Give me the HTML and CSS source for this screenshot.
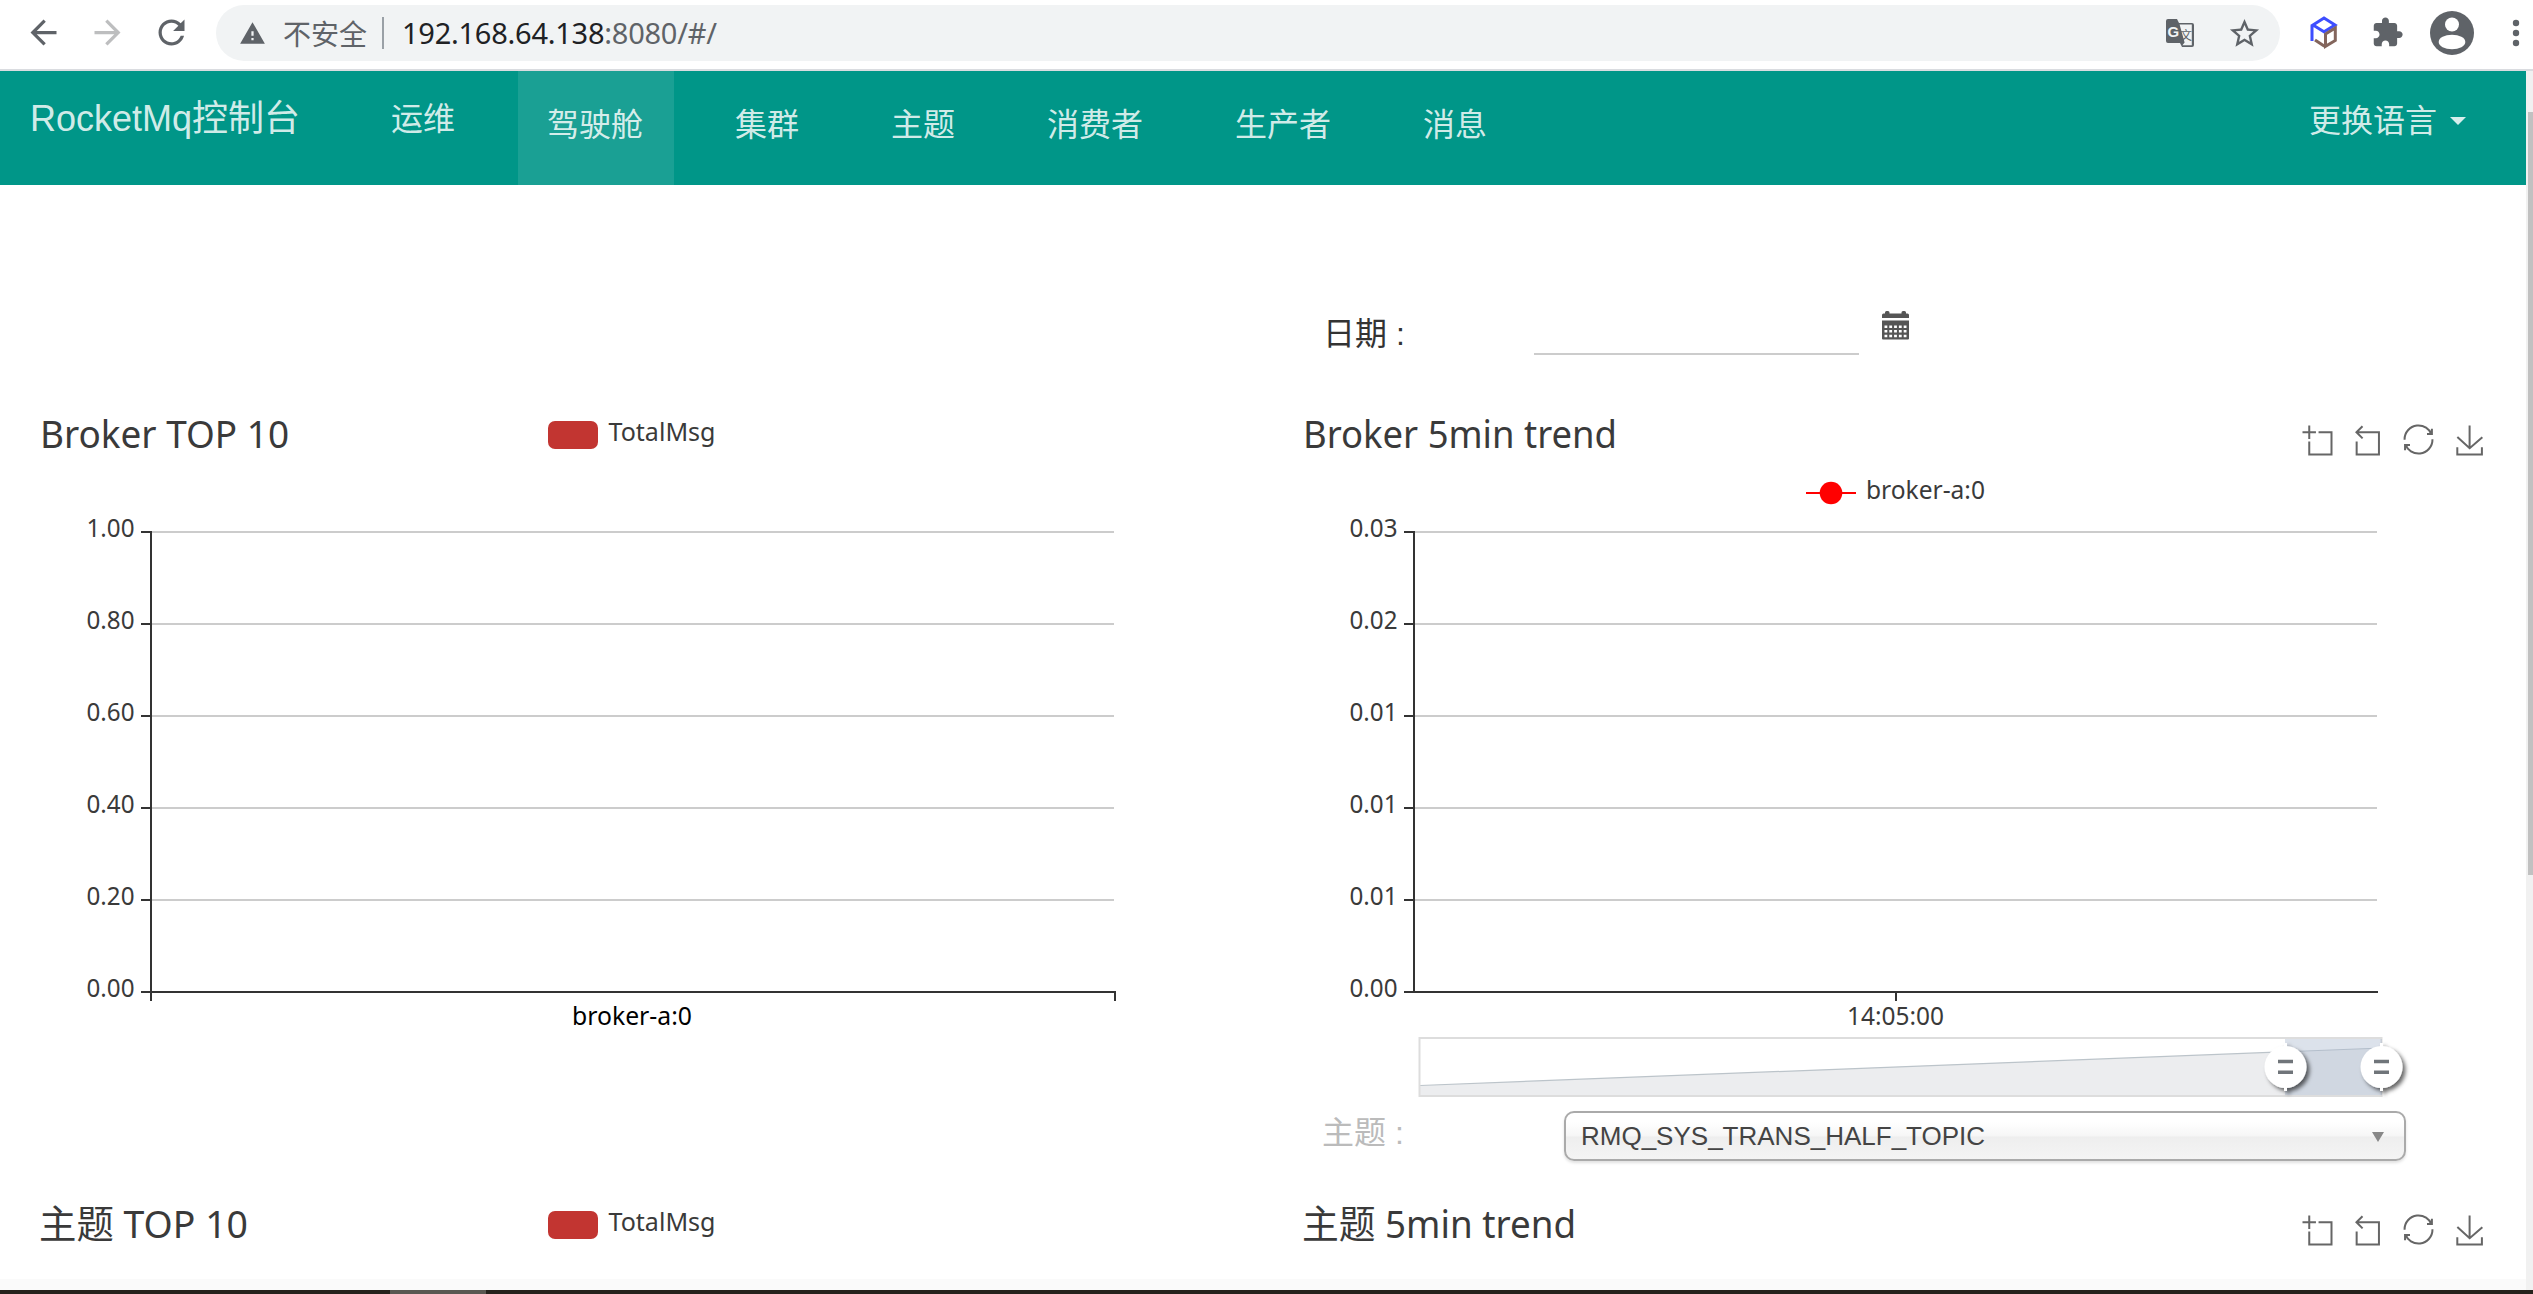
FILE: index.html
```html
<!DOCTYPE html>
<html lang="zh-CN">
<head>
<meta charset="utf-8">
<title>RocketMq控制台</title>
<link rel="stylesheet" href="styles.css">
</head>
<body>
<svg class="defs" width="0" height="0">
  <symbol id="toolbox" viewBox="2300 420 190 40">
    <g class="tool">
      <path transform="translate(2302.5 425.5) scale(.5)" d="M0,13.5h26.9 M13.5,26.9V0 M32.1,13.5H58V58H13.5 V32.1"/>
      <path transform="translate(2351.5 425.5) scale(.5)" d="M22,1.4L9.9,13.5l12.3,12.3 M10.3,13.5H54.9v44.6 H10.3v-26"/>
      <path transform="translate(2403.5 424.5) scale(.5)" d="M47,18.9h9.8V8.7 M56.3,20.1 C52.1,9,40.5,0.6,26.8,2.1C12.6,3.7,1.6,16.2,2.1,30.6 M13,41.1H3.1v10.2 M3.7,39.9c4.2,11.1,15.8,19.5,29.5,18 c14.2-1.6,25.2-14.1,24.7-28.5"/>
      <path transform="translate(2455 425.5) scale(.5)" d="M4.7,22.9L29.3,45.5L54.7,23.4M4.6,43.6L4.6,58L53.8,58L53.8,43.6M29.2,45.1L29.2,0"/>
    </g>
  </symbol>
</svg>

<header class="chrome">
  <div class="history">
    <svg width="39" height="39" viewBox="0 0 24 24"><path d="M20 11H7.83l5.59-5.59L12 4l-8 8 8 8 1.41-1.41L7.83 13H20v-2z"/></svg>
    <svg class="off" width="39" height="39" viewBox="0 0 24 24"><path d="M4 11h12.17l-5.59-5.59L12 4l8 8-8 8-1.41-1.41L16.17 13H4v-2z"/></svg>
    <svg width="39" height="39" viewBox="0 0 24 24"><path d="M17.65 6.35C16.2 4.9 14.21 4 12 4c-4.42 0-7.99 3.58-7.99 8s3.57 8 7.99 8c3.73 0 6.84-2.55 7.73-6h-2.08c-.82 2.33-3.04 4-5.65 4-3.31 0-6-2.69-6-6s2.69-6 6-6c1.66 0 3.14.69 4.22 1.78L13 11h7V4l-2.35 2.35z"/></svg>
  </div>
  <div class="address">
    <svg width="27" height="27" viewBox="0 0 24 24"><path d="M1 21h22L12 2 1 21zm12-3h-2v-2h2v2zm0-4h-2v-4h2v4z"/></svg>
    <span class="insecure">不安全</span>
    <span class="divider"></span>
    <span class="url"><b>192.168.64.138</b>:8080/#/</span>
    <svg class="translate" width="28" height="28" viewBox="0 0 28 28">
      <path d="M2 0h9l2 4h13a2 2 0 0 1 2 2v20a2 2 0 0 1-2 2H16l-2-4H2a2 2 0 0 1-2-2V2a2 2 0 0 1 2-2z"/>
      <path class="paper" d="M13.6 5.4h12.2v20.8H16.4l2.2-2.6z"/>
      <text class="g" x="1.5" y="17.5">G</text><text class="wen" x="14" y="21">文</text>
    </svg>
    <svg class="star" width="35" height="35" viewBox="0 0 24 24"><path d="M22 9.24l-7.19-.62L12 2 9.19 8.63 2 9.24l5.46 4.73L5.82 21 12 17.27 18.18 21l-1.63-7.03L22 9.24zM12 15.4l-3.76 2.27 1-4.28-3.32-2.88 4.38-.38L12 6.1l1.71 4.04 4.38.38-3.32 2.88 1 4.28L12 15.4z"/></svg>
  </div>
  <div class="extensions">
    <svg width="28" height="33" viewBox="0 0 28 33">
      <path class="cube-blue" d="M14 2L25 9 14 15.800 3 9zM2 9.500V25"/>
      <path class="cube-brown" d="M15.500 18L25.300 12V24.500L15.500 30.300zM5 24L14.500 30.300"/>
    </svg>
    <svg width="33" height="33" viewBox="0 0 24 24"><path d="M20.500 11H19V7c0-1.100-.9-2-2-2h-4V3.500C13 2.120 11.880 1 10.500 1S8 2.120 8 3.500V5H4c-1.100 0-1.990.9-1.990 2v3.800H3.500c1.490 0 2.700 1.210 2.700 2.700s-1.210 2.700-2.700 2.700H2V20c0 1.100.9 2 2 2h3.800v-1.500c0-1.490 1.210-2.700 2.700-2.700 1.490 0 2.700 1.210 2.700 2.700V22H17c1.100 0 2-.9 2-2v-4h1.500c1.380 0 2.500-1.120 2.500-2.500S21.880 11 20.500 11z"/></svg>
    <svg width="44" height="44" viewBox="0 0 44 44"><circle cx="22" cy="22" r="22"/><circle class="white" cx="22" cy="13.500" r="7"/><ellipse class="white" cx="22" cy="31" rx="13.300" ry="7.300"/></svg>
    <svg width="8" height="28" viewBox="0 0 8 28"><circle cx="4" cy="4" r="3.200"/><circle cx="4" cy="14" r="3.200"/><circle cx="4" cy="24" r="3.200"/></svg>
  </div>
</header>

<div class="view">
  <main class="page">
    <nav class="nav">
      <a class="brand">RocketMq控制台</a>
      <a class="item ops">运维</a>
      <a class="item active">驾驶舱</a>
      <a class="item">集群</a>
      <a class="item">主题</a>
      <a class="item">消费者</a>
      <a class="item">生产者</a>
      <a class="item">消息</a>
      <a class="lang">更换语言<i class="caret"></i></a>
    </nav>

    <section class="date-row">
      <label>日期 :</label>
      <span class="date-input"></span>
      <svg width="27" height="29" viewBox="0 0 27 29">
        <path class="cal" d="M0 7V4a1.500 1.500 0 0 1 1.500-1.500H3V1.500A1.500 1.500 0 0 1 4.500 0H6a1.500 1.500 0 0 1 1.500 1.500v1h12v-1A1.500 1.500 0 0 1 21 0h1.500A1.500 1.500 0 0 1 24 1.500v1h1.500A1.500 1.500 0 0 1 27 4v3zM0 9.500h27V27.500a1 1 0 0 1-1 1H1a1 1 0 0 1-1-1z"/>
        <path class="cal-grid" d="M2.500 15.700h22M2.500 20.200h22M2.500 25h22"/>
      </svg>
    </section>

    <section class="charts">
      <svg class="chart" viewBox="0 400 1263 700" width="1263" height="700">
        <text class="title" x="40" y="448" textLength="249" lengthAdjust="spacingAndGlyphs">Broker TOP 10</text>
        <rect class="legend" x="548" y="421" width="50" height="28" rx="7"/>
        <text class="label" x="608.500" y="441" textLength="107" lengthAdjust="spacingAndGlyphs">TotalMsg</text>
        <path class="grid" d="M152 532H1114M152 624H1114M152 716H1114M152 808H1114M152 900H1114"/>
        <path class="axis" d="M151 531V1001M141 532h10M141 624h10M141 716h10M141 808h10M141 900h10M141 992H1115V1001"/>
        <g class="label num">
          <text x="86.500" y="537" textLength="48" lengthAdjust="spacingAndGlyphs">1.00</text>
          <text x="86.500" y="629" textLength="48" lengthAdjust="spacingAndGlyphs">0.80</text>
          <text x="86.500" y="721" textLength="48" lengthAdjust="spacingAndGlyphs">0.60</text>
          <text x="86.500" y="813" textLength="48" lengthAdjust="spacingAndGlyphs">0.40</text>
          <text x="86.500" y="905" textLength="48" lengthAdjust="spacingAndGlyphs">0.20</text>
          <text x="86.500" y="997" textLength="48" lengthAdjust="spacingAndGlyphs">0.00</text>
        </g>
        <text class="label black" x="572" y="1025" textLength="120" lengthAdjust="spacingAndGlyphs">broker-a:0</text>
      </svg>
      <svg class="chart" viewBox="1263 400 1263 700" width="1263" height="700">
        <defs>
          <filter id="drop" x="-30%" y="-30%" width="170%" height="170%"><feDropShadow dx="3" dy="3" stdDeviation="2" flood-color="#000" flood-opacity=".6"/></filter>
          <g id="handle" filter="url(#drop)">
            <path class="stem" d="M0-24V24"/><circle class="knob" r="21"/>
            <path class="grip" d="M-7.500-5.500h15M-7.500 5.300h15"/>
          </g>
        </defs>
        <text class="title" x="1303" y="448" textLength="314" lengthAdjust="spacingAndGlyphs">Broker 5min trend</text>
        <use href="#toolbox" x="2300" y="420" width="190" height="40"/>
        <path class="red-line" d="M1806 493h50"/><circle class="red-dot" cx="1831" cy="493" r="11.300"/>
        <text class="label" x="1866" y="499" textLength="119" lengthAdjust="spacingAndGlyphs">broker-a:0</text>
        <path class="grid" d="M1415 532H2377M1415 624H2377M1415 716H2377M1415 808H2377M1415 900H2377"/>
        <path class="axis" d="M1414 531V992M1404 532h10M1404 624h10M1404 716h10M1404 808h10M1404 900h10M1404 992H2378M1896 992v9"/>
        <g class="label num">
          <text x="1349.500" y="537" textLength="48" lengthAdjust="spacingAndGlyphs">0.03</text>
          <text x="1349.500" y="629" textLength="48" lengthAdjust="spacingAndGlyphs">0.02</text>
          <text x="1349.500" y="721" textLength="48" lengthAdjust="spacingAndGlyphs">0.01</text>
          <text x="1349.500" y="813" textLength="48" lengthAdjust="spacingAndGlyphs">0.01</text>
          <text x="1349.500" y="905" textLength="48" lengthAdjust="spacingAndGlyphs">0.01</text>
          <text x="1349.500" y="997" textLength="48" lengthAdjust="spacingAndGlyphs">0.00</text>
        </g>
        <text class="label" x="1847" y="1025" textLength="97" lengthAdjust="spacingAndGlyphs">14:05:00</text>
        <path class="zoom-area" d="M1420 1085.500L2382 1048V1096H1420z"/>
        <path class="zoom-line" d="M1420 1085.500L2382 1048"/>
        <rect class="zoom-frame" x="1419.500" y="1038" width="962" height="58"/>
        <rect class="zoom-window" x="2285" y="1039" width="97" height="56"/>
        <use href="#handle" x="2285.500" y="1067"/>
        <use href="#handle" x="2381.500" y="1067"/>
      </svg>
    </section>

    <section class="topic-row">
      <label>主题 :</label>
      <div class="select"><span>RMQ_SYS_TRANS_HALF_TOPIC</span><i class="arrow"></i></div>
    </section>

    <section class="charts">
      <svg class="chart" viewBox="0 380 1263 109" width="1263" height="109">
        <text class="title" x="39" y="448" textLength="209" lengthAdjust="spacingAndGlyphs">主题 TOP 10</text>
        <rect class="legend" x="548" y="421" width="50" height="28" rx="7"/>
        <text class="label" x="608.500" y="441" textLength="107" lengthAdjust="spacingAndGlyphs">TotalMsg</text>
      </svg>
      <svg class="chart" viewBox="1263 380 1263 109" width="1263" height="109">
        <text class="title" x="1302" y="448" textLength="274" lengthAdjust="spacingAndGlyphs">主题 5min trend</text>
        <use href="#toolbox" x="2300" y="420" width="190" height="40"/>
      </svg>
    </section>
    <div class="page-end"></div>
  </main>
  <div class="scrollbar"><div class="thumb"></div></div>
</div>
<div class="taskbar"><div class="task"></div></div>
</body>
</html>
```
FILE: styles.css
```css
* { box-sizing: border-box; }
body {
  margin: 0;
  width: 2533px;
  height: 1294px;
  overflow: hidden;
  background: #fff;
  color: #333;
  font-family: "Liberation Sans", "Noto Sans CJK SC", sans-serif;
}
svg { display: block; flex: none; }
.defs { position: absolute; }

/* browser toolbar */
.chrome {
  display: flex;
  align-items: center;
  height: 71px;
  padding: 0 0 4px 24px;
  border-bottom: 2px solid #dadce0;
  fill: #5f6368;
}
.history { display: flex; gap: 25px; width: 192px; flex: none; }
.off { fill: #bdbebf; }
.address {
  display: flex;
  align-items: center;
  width: 2064px;
  height: 56px;
  margin-top: 1px;
  padding: 0 18px 0 23px;
  border-radius: 28px;
  background: #f1f3f4;
  color: #5f6368;
  font-family: "Noto Sans", "Noto Sans CJK SC", sans-serif;
}
.insecure { margin-left: 17px; width: 85px; font: 28px/40px "Noto Sans CJK SC", sans-serif; }
.divider { width: 2px; height: 32px; margin: 0 18px 0 14px; background: #9aa0a6; }
.url { margin-top: -1px; font-size: 29px; line-height: 40px; letter-spacing: -.25px; }
.url b { font-weight: 400; color: #202124; }
.translate { margin-left: auto; }
.star { margin-left: 33px; }
.paper { fill: #f1f3f4; }
.g { font: 700 15px "Liberation Sans", sans-serif; fill: #f1f3f4; }
.wen { font: 12px "Noto Sans CJK SC", sans-serif; }
.extensions { display: flex; align-items: center; margin-left: 30px; }
.extensions svg:nth-child(2) { margin-left: 33px; }
.extensions svg:nth-child(3) { margin-left: 26px; }
.extensions svg:nth-child(4) { margin-left: 38px; }
.white { fill: #fff; }
.cube-blue, .cube-brown { fill: none; stroke: #3d4eff; stroke-width: 3; }
.cube-brown { stroke: #83655c; }

.view { display: flex; height: 1219px; }
.page { width: 2526px; }
.scrollbar { width: 7px; padding: 41px 0 0 2px; background: #f1f1f1; }
.thumb { height: 763px; background: #c1c1c1; }

/* navigation */
.nav {
  display: flex;
  height: 114px;
  padding-left: 30px;
  background: #009688;
  color: rgba(255, 255, 255, .84);
}
.brand { width: 332px; font-size: 36px; line-height: 96px; }
.item { padding: 0 31px 0 29px; margin-right: 32px; font-size: 32px; line-height: 108px; }
.ops { line-height: 97px; }
.active { background: rgba(255, 255, 255, .1); }
.lang {
  display: flex;
  align-items: center;
  height: 93px;
  margin: 0 60px 0 auto;
  font-size: 32px;
}
.caret {
  margin: 7px 0 0 13px;
  border: 8px solid transparent;
  border-top-color: currentColor;
  border-bottom: 0;
}

/* date filter */
.date-row { display: flex; height: 215px; padding: 126px 0 0 1323px; }
.date-row label { width: 211px; font-size: 32px; line-height: 46px; }
.date-input { width: 325px; height: 44px; margin-right: 23px; border-bottom: 2px solid #ccc; }
.cal { fill: #555; }
.cal-grid { stroke: #fff; stroke-width: 2.500; stroke-dasharray: 2.800 2; fill: none; }

/* charts */
.charts { display: grid; grid-template-columns: 1263px 1263px; }
.chart { font-family: "Noto Sans", "Noto Sans CJK SC", sans-serif; }
.title { font-size: 38.500px; fill: #3a3a3a; }
.label { font-size: 25.500px; fill: #3a3a3a; }
.black { fill: #000; }
.legend { fill: #c23531; }
.grid { stroke: #ccc; stroke-width: 2; fill: none; }
.axis { stroke: #333; stroke-width: 2; fill: none; }
.tool { fill: none; stroke: #666; stroke-width: 4; }
.red-line { stroke: red; stroke-width: 2; }
.red-dot { fill: red; }
.zoom-area { fill: #ecedef; }
.zoom-line { stroke: #bcc4ca; stroke-width: 1.200; }
.zoom-frame { fill: none; stroke: #ddd; stroke-width: 2; }
.zoom-window { fill: rgba(167, 183, 204, .4); }
.stem { stroke: #fff; stroke-width: 3; }
.knob { fill: #fff; }
.grip { stroke: #70747a; stroke-width: 3.500; fill: none; }

/* topic selector */
.topic-row { display: flex; height: 70px; padding: 11px 0 0 1322px; }
.topic-row label { width: 242px; font-size: 32px; line-height: 44px; color: #bbb; }
.select {
  display: flex;
  justify-content: space-between;
  align-items: center;
  width: 842px;
  height: 50px;
  padding: 1px 20px 0 15px;
  border: 2px solid #aaa;
  border-radius: 10px;
  background: linear-gradient(#fff 20%, #f6f6f6 50%, #eee 52%, #f4f4f4 100%);
  box-shadow: 0 2px 3px rgba(0, 0, 0, .12);
  color: #444;
  font-size: 26px;
}
.arrow { border: 6px solid transparent; border-top: 10px solid #888; border-bottom: 0; }

.page-end { height: 11px; background: #fafafa; }
.taskbar { height: 4px; padding-left: 390px; background: #25221c; }
.task { width: 96px; height: 4px; background: #5a5852; }
```
